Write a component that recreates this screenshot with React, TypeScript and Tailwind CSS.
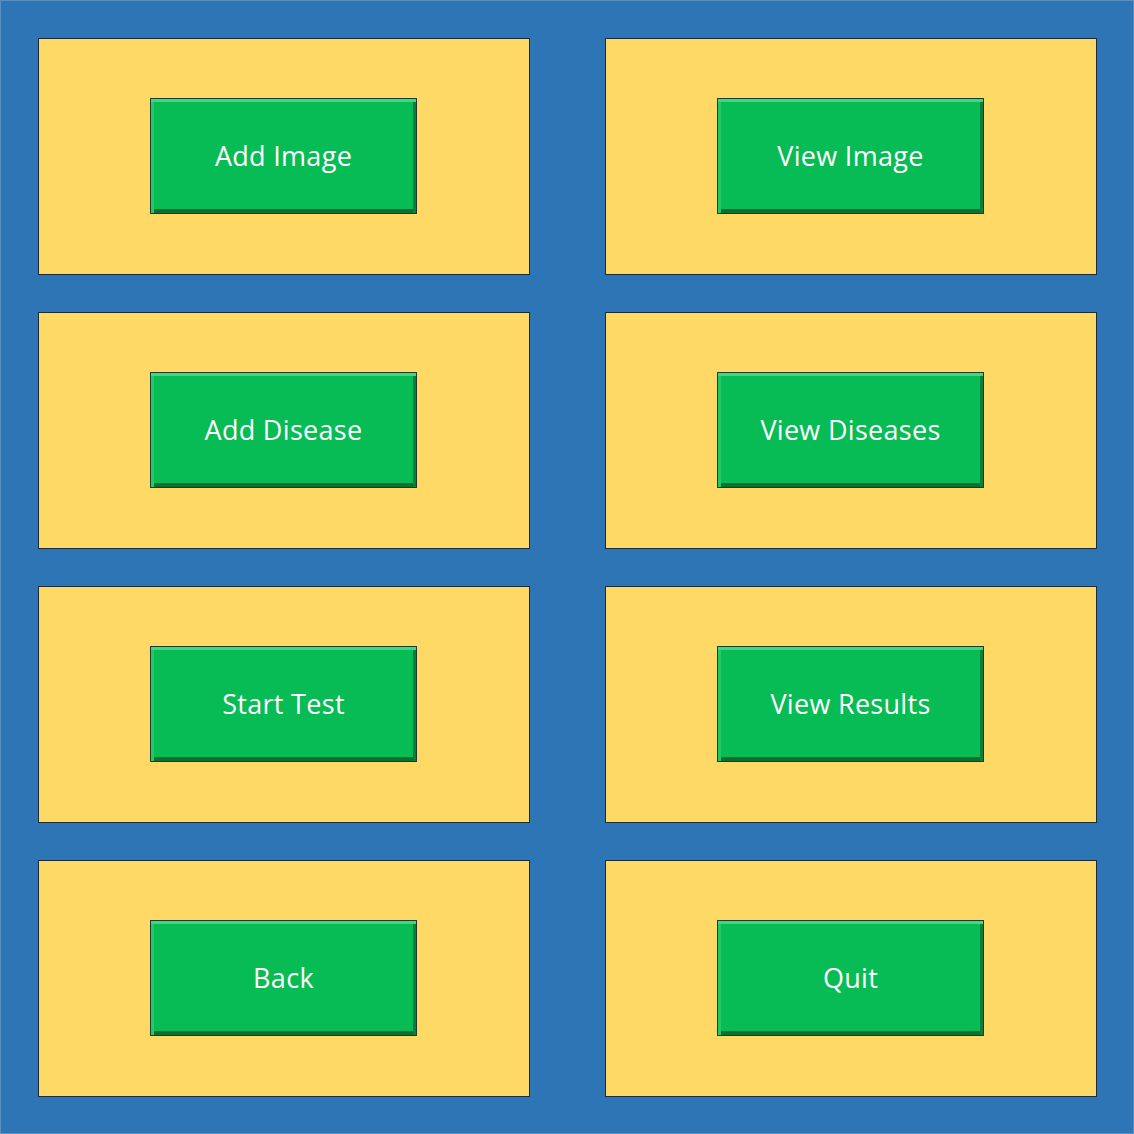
import React from 'react';

const labels = [
  'Add Image',
  'View Image',
  'Add Disease',
  'View Diseases',
  'Start Test',
  'View Results',
  'Back',
  'Quit',
];

const MenuButton: React.FC<{ label: string }> = ({ label }) => (
  <button
    className="w-[267px] h-[116px] bg-[#07BB55] border border-[#1f3a2a] text-white text-[27px] flex items-center justify-center shadow-[inset_0_3px_0_#3fd77f,inset_3px_0_0_#20c868,inset_-3px_0_0_#0a7e3c,inset_0_-4px_0_#0b6e36]"
    style={{ fontFamily: '"Open Sans", "Liberation Sans", sans-serif' }}
  >
    <span className="tracking-[0.3px]">{label}</span>
  </button>
);

const App: React.FC = () => {
  return (
    <div className="w-[1134px] h-[1134px] bg-[#2E75B6] border border-[#5a8fc4] pt-[37px] pl-[37px] pr-[36px] pb-[36px]">
      <div className="grid grid-cols-[492px_492px] gap-x-[75px] gap-y-[37px]">
        {labels.map((label) => (
          <div
            key={label}
            className="h-[237px] bg-[#FFD966] border border-[#1e2a36] flex items-start justify-start pl-[111px] pt-[59px]"
          >
            <MenuButton label={label} />
          </div>
        ))}
      </div>
    </div>
  );
};

export default App;
